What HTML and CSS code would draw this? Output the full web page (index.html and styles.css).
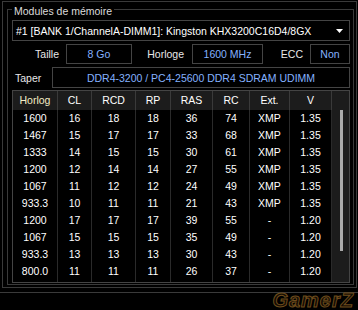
FILE: index.html
```html
<!DOCTYPE html>
<html lang="fr">
<head>
  <meta charset="UTF-8" />
  <meta name="viewport" content="width=device-width, initial-scale=1.0"/>
  <title>Modules de mémoire</title>
  <link rel="stylesheet" href="styles.css">
</head>
<body>
  <div class="frame">
    <fieldset class="group">
      <legend>Modules de mémoire</legend>

      <div class="select">
        <span>#1 [BANK 1/ChannelA-DIMM1]: Kingston KHX3200C16D4/8GX</span>
        <svg class="arrow" width="7" height="4" viewBox="0 0 7 4"><path d="M0 0h7L3.5 4z" fill="#fff"/></svg>
      </div>

      <div class="row">
        <span class="label lbl-size">Taille</span>
        <span class="value val-size">8 Go</span>
        <span class="label lbl-clock">Horloge</span>
        <span class="value val-clock">1600 MHz</span>
        <span class="label lbl-ecc">ECC</span>
        <span class="value val-ecc">Non</span>
      </div>

      <div class="row row-type">
        <span class="label lbl-type">Taper</span>
        <span class="value val-type">DDR4-3200 / PC4-25600 DDR4 SDRAM UDIMM</span>
      </div>

      <div class="table">
        <div class="grid" id="timings">
          <!-- header + rows are filled in below -->
        </div>
        <div class="scrollbar">
          <div class="thumb"></div>
        </div>
      </div>
    </fieldset>
  </div>

  <div class="footer">
    <span class="watermark">GamerZ</span>
  </div>

  <script>
    const headers = ['Horlog', 'CL', 'RCD', 'RP', 'RAS', 'RC', 'Ext.', 'V'];
    const timings = [
      ['1600', 16, 18, 18, 36, 74, 'XMP', '1.35'],
      ['1467', 15, 17, 17, 33, 68, 'XMP', '1.35'],
      ['1333', 14, 15, 15, 30, 61, 'XMP', '1.35'],
      ['1200', 12, 14, 14, 27, 55, 'XMP', '1.35'],
      ['1067', 11, 12, 12, 24, 49, 'XMP', '1.35'],
      ['933.3', 10, 11, 11, 21, 43, 'XMP', '1.35'],
      ['1200', 17, 17, 17, 39, 55, '-', '1.20'],
      ['1067', 15, 15, 15, 35, 49, '-', '1.20'],
      ['933.3', 13, 13, 13, 30, 43, '-', '1.20'],
      ['800.0', 11, 11, 11, 26, 37, '-', '1.20']
    ];

    const grid = document.getElementById('timings');

    headers.forEach((text, i) => {
      const cell = document.createElement('div');
      cell.className = i === 0 ? 'cell head sorted' : 'cell head';
      cell.textContent = text;
      grid.appendChild(cell);
    });

    timings.forEach((row, r) => {
      row.forEach(value => {
        const cell = document.createElement('div');
        cell.className = r === timings.length - 1 ? 'cell last' : 'cell';
        cell.textContent = value;
        grid.appendChild(cell);
      });
    });
  </script>
</body>
</html>
```

FILE: styles.css
```css
* {
  margin: 0;
  padding: 0;
  box-sizing: border-box;
}

body {
  width: 358px;
  height: 310px;
  overflow: hidden;
  background: #000;
  color: #e6e6e6;
  font-family: "Liberation Sans", Arial, sans-serif;
  font-size: 10.5px;
}

.frame {
  margin: 1px 1px 0 2px;
  border: 1px solid #3a3a3a;
  padding: 0 2px 2px 4px;
}

.group {
  border: 1px solid #3a3a3a;
  padding: 3px 3px 1px 4px;
  min-width: 0;
}

.group legend {
  padding: 3px 2px 0;
  line-height: 12px;
  color: #dcdcdc;
}

.select {
  display: flex;
  align-items: center;
  justify-content: space-between;
  height: 21px;
  border: 1px solid #444;
  padding: 0 6px 0 3px;
  color: #fff;
  white-space: nowrap;
}

.arrow {
  display: block;
  flex-shrink: 0;
}

.row {
  display: flex;
  align-items: center;
  height: 20px;
  margin-top: 3px;
}

.row-type {
  height: 21px;
}

.label {
  color: #e8e8e8;
  text-align: right;
  white-space: nowrap;
}

.value {
  display: flex;
  align-items: center;
  justify-content: center;
  height: 100%;
  border: 1px solid #444;
  color: #84b2ff;
  white-space: nowrap;
}

.lbl-size { width: 54px; padding-right: 7px; }
.val-size { width: 66px; }
.lbl-clock { width: 60px; padding-right: 8px; }
.val-clock { width: 71px; }
.lbl-ecc { width: 47px; padding-right: 7px; }
.val-ecc { width: 40px; }
.lbl-type { width: 40px; padding-left: 3px; text-align: left; }
.val-type { width: 298px; }

.table {
  display: flex;
  margin-top: 2px;
  border: 1px solid #444;
}

.grid {
  display: grid;
  grid-template-columns: 45px 34px 44px 35px 42px 37px 40px 42px;
}

.cell {
  border-right: 1px solid #2a2a2a;
  line-height: 17px;
  text-align: center;
  color: #fff;
  white-space: nowrap;
  overflow: hidden;
}

.cell.head {
  line-height: 19px;
  background: #1c1c1c;
  border-right-color: #3a3a3a;
}

.cell.sorted {
  color: #f3ecc4;
}

.cell.last {
  padding-bottom: 2px;
}

.scrollbar {
  width: 17px;
  background: #1c1c1c;
  padding: 19px 0 0 8px;
}

.thumb {
  width: 3px;
  height: 141px;
  background: #a9a9a9;
}

.footer {
  position: relative;
  margin-top: 4px;
  height: 18px;
  border-top: 1px solid #3a3a3a;
}

.watermark {
  position: absolute;
  right: 4px;
  top: -2px;
  font-size: 20px;
  line-height: 18px;
  font-weight: bold;
  font-style: italic;
  letter-spacing: 1px;
  color: #140d04;
  -webkit-text-stroke: 1px #6e4c1c;
}
```
